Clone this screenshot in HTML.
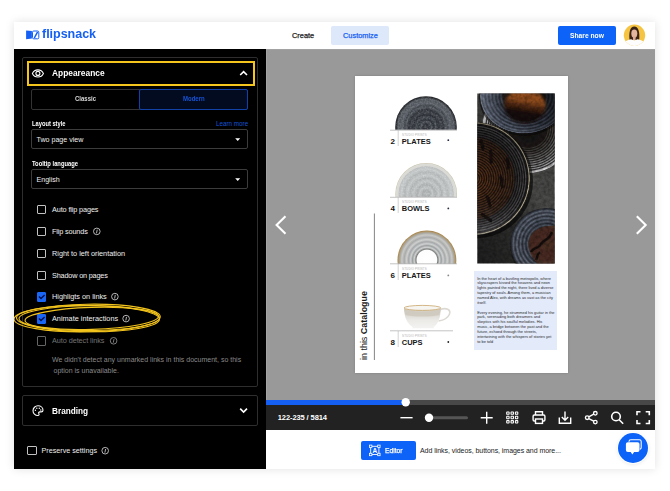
<!DOCTYPE html>
<html><head><meta charset="utf-8">
<style>
*{box-sizing:border-box;margin:0;padding:0}
html,body{width:670px;height:491px;background:#fff;overflow:hidden;font-family:"Liberation Sans",sans-serif;}
.abs{position:absolute}
.t{position:absolute;white-space:nowrap;color:#fff;line-height:10px;height:10px}
#card{position:absolute;left:14px;top:22px;width:641px;height:447px;background:#fff;box-shadow:0 0 9px rgba(0,0,0,.12);}
#side{position:absolute;left:14px;top:49px;width:252px;height:420px;background:#000}
#view{position:absolute;left:266px;top:49px;width:389px;height:351px;background:#999;border-left:1px solid #a4a4a4;border-top:1px solid #a2a2a2}
#prog{position:absolute;left:266px;top:400px;width:389px;height:5px;background:#484848}
#prog i{position:absolute;left:0;top:0;width:140px;height:5px;background:#1560f2}
#tb{position:absolute;left:266px;top:405px;width:389px;height:24.600px;background:#222}
.panel{position:absolute;border:1px solid #2e2e2e;border-radius:2px}
.cb{position:absolute;left:36.900px;width:9.500px;height:9.500px;border:1px solid #c2c2c2;border-radius:1px;margin-top:-0.500px}
.cb.on{background:#1a66f5;border-color:#1a66f5}
.sel{position:absolute;left:31px;width:217px;height:20px;border:1px solid #3c3c3c;border-radius:2px}
.lab{left:52px;font-size:7.3px;color:#f0f0f0}
#ov{position:absolute;left:0;top:0;width:670px;height:491px}
</style></head><body>
<div id="card"></div>
<!-- header -->
<div class="t" style="left:42px;top:27.800px;font-size:13.5px;font-weight:bold;color:#1560f2;letter-spacing:-0.05px;transform:scaleX(.93);transform-origin:0 0;line-height:12px;height:12px">flipsnack</div>
<div class="t" style="left:292px;top:30.500px;font-size:7.4px;color:#222;-webkit-text-stroke:0.25px #222">Create</div>
<div class="abs" style="left:331px;top:25.500px;width:58px;height:19.500px;background:#dee8fb;border-radius:2px"></div>
<div class="t" style="left:343px;top:30.500px;font-size:7.4px;color:#1560f2;-webkit-text-stroke:0.25px #1560f2">Customize</div>
<div class="abs" style="left:558px;top:25.500px;width:58px;height:19.500px;background:#0d62f7;border-radius:2px"></div>
<div class="t" style="left:570px;top:30.500px;font-size:7.6px;color:#fff;font-weight:bold;transform:scaleX(0.883);transform-origin:0 0">Share now</div>
<!-- sidebar -->
<div id="side"></div>
<div class="panel" style="left:22px;top:57px;width:236px;height:329.500px"></div>
<div class="abs" style="left:27px;top:61px;width:228.200px;height:25px;border:2.800px solid #f4c51c"></div>
<div class="t" style="left:52px;top:68.300px;font-size:9.4px;font-weight:bold;transform:scaleX(0.893);transform-origin:0 0">Appeareance</div>
<div class="abs" style="left:31px;top:89px;width:217px;height:20.500px;border:1px solid #333;border-radius:2px"></div>
<div class="abs" style="left:139px;top:89px;width:109px;height:20.500px;border:1px solid #1242a8;border-radius:2px;background:#030b20"></div>
<div class="t" style="left:75px;top:94px;font-size:6.6px;font-weight:bold;color:#d8d8d8;transform:scaleX(0.909);transform-origin:0 0">Classic</div>
<div class="t" style="left:182.500px;top:94px;font-size:6.6px;font-weight:bold;color:#1553d8;transform:scaleX(0.911);transform-origin:0 0">Modern</div>
<div class="t" style="left:31.800px;top:118.500px;font-size:6.5px;font-weight:bold;transform:scaleX(0.883);transform-origin:0 0">Layout style</div>
<div class="t" style="left:216px;top:118.500px;font-size:6.3px;color:#1553d8">Learn more</div>
<div class="sel" style="top:129px"></div>
<div class="t" style="left:36.500px;top:134.500px;font-size:7.1px;color:#eee">Two page view</div>
<div class="t" style="left:31.800px;top:158.500px;font-size:6.5px;font-weight:bold;transform:scaleX(0.893);transform-origin:0 0">Tooltip language</div>
<div class="sel" style="top:169px"></div>
<div class="t" style="left:36.500px;top:174.500px;font-size:7.1px;color:#eee">English</div>

<div class="cb" style="top:205px"></div><div class="t lab" style="top:204.500px;letter-spacing:-0.13px">Auto flip pages</div>
<div class="cb" style="top:227px"></div><div class="t lab" style="top:226.500px;letter-spacing:-0.15px">Flip sounds</div>
<div class="cb" style="top:249px"></div><div class="t lab" style="top:248.500px">Right to left orientation</div>
<div class="cb" style="top:271px"></div><div class="t lab" style="top:270.500px;letter-spacing:-0.18px">Shadow on pages</div>
<div class="cb on" style="left:36.800px;top:292.500px"></div><div class="t lab" style="top:292px">Highligts on links</div>
<div class="cb on" style="left:36.800px;top:314.500px"></div><div class="t lab" style="top:314px">Animate interactions</div>
<div class="cb" style="top:336.500px;border-color:#666"></div><div class="t lab" style="top:336px;color:#747474;letter-spacing:-0.07px">Auto detect links</div>
<div class="t" style="left:52px;top:354.500px;font-size:7px;color:#8a8a8a">We didn't detect any unmarked links in this document, so this</div>
<div class="t" style="left:53.500px;top:365.500px;font-size:7px;color:#8a8a8a">option is unavailable.</div>

<div class="panel" style="left:22px;top:394.500px;width:236px;height:31.500px"></div>
<div class="t" style="left:52px;top:405.500px;font-size:9.4px;font-weight:bold;transform:scaleX(0.877);transform-origin:0 0">Branding</div>
<div class="cb" style="left:27px;top:446px"></div>
<div class="t" style="left:41.500px;top:445.500px;font-size:7.2px;color:#eee">Preserve settings</div>

<!-- viewer -->
<div id="view"></div>
<div class="abs" style="left:354.500px;top:75.500px;width:213px;height:297.500px;background:#fff;box-shadow:0 0 2.500px rgba(0,0,0,.18)"></div>
<div class="abs" style="left:474px;top:271px;width:83px;height:78.500px;background:#e3ebfb"></div>
<div id="prog"><i></i></div>
<div id="tb"></div>
<div class="t" style="left:277.800px;top:413px;font-size:7.5px;font-weight:bold;letter-spacing:-0.1px">122-235 / 5814</div>
<!-- bottom bar -->
<div class="abs" style="left:360.500px;top:441px;width:55px;height:19px;background:#0d62f7;border-radius:2px"></div>
<div class="t" style="left:385px;top:445.500px;font-size:7.2px;color:#fff;transform:scaleX(0.937);transform-origin:0 0;-webkit-text-stroke:0.25px #fff">Editor</div>
<div class="t" style="left:420px;top:445.500px;font-size:7px;color:#222;letter-spacing:-0.05px">Add links, videos, buttons, images and more...</div>
<div class="abs" style="left:618.400px;top:432.700px;width:30px;height:30px;border-radius:50%;background:#0d62f7;box-shadow:0 0 0 1px rgba(255,255,255,.9),0 1px 4px rgba(0,0,0,.12)"></div>

<svg id="ov" viewBox="0 0 670 491">
<!--ICONS1-->
<!-- logo -->
<g fill="#1560f2" stroke="none">
<path d="M26.100 30.400 L31.900 31 L31.900 38.600 L26.100 39.200 Z"/>
</g>
<rect x="32.500" y="31" width="6.300" height="7.800" rx="1.200" fill="none" stroke="#1560f2" stroke-width="1"/>
<path d="M34.300 38 L37.600 31.800" stroke="#1560f2" stroke-width="1.500" fill="none"/>
<!-- avatar -->
<clipPath id="avc"><circle cx="634.500" cy="35.300" r="10.700"/></clipPath>
<circle cx="634.500" cy="35.300" r="10.700" fill="#f6c443"/>
<g clip-path="url(#avc)">
<path d="M629.500 40 C628.800 32 630 26.500 634.300 26.500 C638.600 26.500 639.800 32 639.200 40 Z" fill="#3a2219"/>
<ellipse cx="634.300" cy="33.600" rx="3" ry="4.200" fill="#e2b59c"/>
<rect x="633" y="36.500" width="2.600" height="3.500" fill="#dca98e"/>
<path d="M621 48 C621 44 626 40 631 39.300 L634.300 40.500 L637.600 39.300 C642.600 40 648 44 648 48 Z" fill="#fdfdfe"/>
</g>
<!-- eye -->
<g fill="none" stroke="#fff" stroke-width="1.100">
<path d="M32.400 73.400 C34.600 68.700 41.200 68.700 43.400 73.400 C41.200 78.100 34.600 78.100 32.400 73.400 Z"/>
<circle cx="37.900" cy="73.400" r="2"/>
</g>
<!-- chevrons -->
<path d="M240.200 75 L243.600 71.600 L247 75" fill="none" stroke="#fff" stroke-width="1.600"/>
<path d="M240.200 408.600 L243.600 412 L247 408.600" fill="none" stroke="#fff" stroke-width="1.600"/>
<!-- carets -->
<path d="M235.200 138.200 L240.200 138.200 L237.700 140.900 Z" fill="#fff"/>
<path d="M235.200 178.200 L240.200 178.200 L237.700 180.900 Z" fill="#fff"/>
<!-- info icons -->
<g fill="none" stroke="#e0e0e0" stroke-width="0.800">
<circle cx="96.800" cy="231.400" r="3.300"/><path d="M97.200 229.700 L96.500 233.300" />
<circle cx="114.900" cy="296.600" r="3.300"/><path d="M115.300 294.900 L114.600 298.500" />
<circle cx="126.100" cy="318.600" r="3.300"/><path d="M126.500 316.900 L125.800 320.500" />
<circle cx="105.200" cy="450.700" r="3.300"/><path d="M105.600 449 L104.900 452.600" />
</g>
<g fill="none" stroke="#9a9a9a" stroke-width="0.800">
<circle cx="113.600" cy="340.800" r="3.300"/><path d="M114 339.100 L113.300 342.700" />
</g>
<!-- checks -->
<path d="M39 296.500 L41 298.500 L44.600 294.900" fill="none" stroke="#06104a" stroke-width="1.400"/>
<path d="M39 318.500 L41 320.500 L44.600 316.900" fill="none" stroke="#06104a" stroke-width="1.400"/>
<!-- scribble -->
<clipPath id="sc"><rect x="14" y="290" width="252" height="60"/></clipPath>
<g clip-path="url(#sc)" fill="none" stroke="#f2c31c" stroke-width="1.100">
<ellipse cx="87.150" cy="318" rx="73.150" ry="13.800" transform="rotate(-1 87 318)"/>
<ellipse cx="89.250" cy="318.200" rx="70.250" ry="12.400" transform="rotate(-0.300 89 318)"/>
<ellipse cx="91.750" cy="318.400" rx="66.750" ry="11" transform="rotate(-1.800 92 318)"/>
<ellipse cx="88" cy="318.600" rx="71.500" ry="13.200" transform="rotate(0.600 88 318)"/>
</g>
<!-- palette -->
<g fill="none" stroke="#fff" stroke-width="1.100">
<path d="M38 405.800 C35.200 405.800 33 408 33 410.700 C33 413.400 35.200 415.500 37.800 415.500 C39.200 415.500 39.300 414.300 38.800 413.600 C38.300 412.700 38.900 411.900 39.900 411.900 L41.200 411.900 C42.400 411.900 43 411.200 43 410.200 C43 407.700 40.800 405.800 38 405.800 Z"/>
</g>
<g fill="#fff"><circle cx="35.400" cy="410.300" r="0.700"/><circle cx="36.800" cy="408.200" r="0.700"/><circle cx="39.300" cy="408.200" r="0.700"/><circle cx="40.800" cy="410" r="0.700"/></g>
<!-- nav -->
<path d="M285.500 216.200 L276.600 224.900 L285.500 233.800" fill="none" stroke="#fff" stroke-width="2.100"/>
<path d="M636.800 216.200 L645.700 224.900 L636.800 233.800" fill="none" stroke="#fff" stroke-width="2.100"/>
<!-- progress knob -->
<circle cx="405.700" cy="402.300" r="4.200" fill="#fff"/>
<!-- toolbar -->
<g fill="none" stroke="#fff" stroke-width="1.400">
<path d="M400.400 417.700 L412.600 417.700"/>
<path d="M480.700 417.700 L492.700 417.700 M486.700 411.700 L486.700 423.700"/>
</g>
<rect x="429" y="416.200" width="39" height="3" rx="1.500" fill="#555"/>
<circle cx="429" cy="417.700" r="4.200" fill="#fff"/>
<g fill="none" stroke="#fff" stroke-width="1.050">
<rect x="506.70" y="411.90" width="2.400" height="2.400" rx="0.400"/><rect x="511.05" y="411.90" width="2.400" height="2.400" rx="0.400"/><rect x="515.40" y="411.90" width="2.400" height="2.400" rx="0.400"/><rect x="506.70" y="416.25" width="2.400" height="2.400" rx="0.400"/><rect x="511.05" y="416.25" width="2.400" height="2.400" rx="0.400"/><rect x="515.40" y="416.25" width="2.400" height="2.400" rx="0.400"/><rect x="506.70" y="420.60" width="2.400" height="2.400" rx="0.400"/><rect x="511.05" y="420.60" width="2.400" height="2.400" rx="0.400"/><rect x="515.40" y="420.60" width="2.400" height="2.400" rx="0.400"/>
</g>
<!-- print -->
<g fill="none" stroke="#fff" stroke-width="1.400">
<path d="M535.500 415 L535.500 411.800 L542.500 411.800 L542.500 415"/>
<rect x="533.100" y="415" width="11.800" height="6" rx="1.200"/>
<rect x="535.500" y="419" width="7" height="4.400" fill="#222"/>
</g>
<!-- download -->
<g fill="none" stroke="#fff" stroke-width="1.400">
<path d="M559.300 417.500 L559.300 423.300 L570.700 423.300 L570.700 417.500"/>
<path d="M565 411.500 L565 420 M561.800 417 L565 420.200 L568.200 417"/>
</g>
<!-- share -->
<g fill="none" stroke="#fff" stroke-width="1.350">
<circle cx="595.300" cy="413.300" r="1.800"/><circle cx="587.200" cy="417.700" r="1.800"/><circle cx="595.300" cy="422.100" r="1.800"/>
<path d="M588.800 416.800 L593.700 414.200 M588.800 418.600 L593.700 421.200"/>
</g>
<!-- search -->
<g fill="none" stroke="#fff" stroke-width="1.600">
<circle cx="616" cy="416.500" r="4.300"/><path d="M619.200 419.700 L623.200 423.800"/>
</g>
<!-- fullscreen -->
<g fill="none" stroke="#fff" stroke-width="1.600">
<path d="M637 415.300 L637 411.800 L640.500 411.800 M645.700 411.800 L649.300 411.800 L649.300 415.300 M649.300 420 L649.300 423.500 L645.700 423.500 M640.500 423.500 L637 423.500 L637 420"/>
</g>
<!-- editor icon -->
<g transform="translate(0.900 0)">
<g fill="none" stroke="#fff" stroke-width="0.900">
<rect x="369.800" y="446.300" width="8.200" height="8.200"/>
</g>
<g fill="#0d62f7" stroke="#fff" stroke-width="0.800">
<rect x="368.600" y="445.100" width="2.400" height="2.400"/><rect x="376.800" y="445.100" width="2.400" height="2.400"/><rect x="368.600" y="453.300" width="2.400" height="2.400"/><rect x="376.800" y="453.300" width="2.400" height="2.400"/>
</g>
<text x="373.900" y="452.700" font-family="Liberation Sans, sans-serif" font-size="6.500" font-weight="bold" fill="#fff" text-anchor="middle">A</text>
</g>
<!-- chat -->
<g>
<path d="M629 441.800 v-0.300 a1.800 1.800 0 0 1 1.800 -1.800 h8.600 a1.800 1.800 0 0 1 1.800 1.800 v6 a1.800 1.800 0 0 1 -1.300 1.750" fill="none" stroke="#fff" stroke-width="1.100"/>
<path d="M625.900 444.100 a1.900 1.900 0 0 1 1.900 -1.900 h9.800 a1.900 1.900 0 0 1 1.900 1.900 v6 a1.900 1.900 0 0 1 -1.900 1.900 h-3.500 l-1.700 2.600 l-1.700 -2.600 h-2.900 a1.900 1.900 0 0 1 -1.900 -1.900 z" fill="#fff"/>
</g>

<!--/ICONS1-->
<!--PAGE1-->
<defs>
<radialGradient id="p1" gradientUnits="userSpaceOnUse" cx="426" cy="127" r="30.800">
<stop offset="0" stop-color="#3c4047"/><stop offset="0.100" stop-color="#2d3036"/><stop offset="0.170" stop-color="#4a4f57"/>
<stop offset="0.240" stop-color="#2c2f35"/><stop offset="0.320" stop-color="#444951"/><stop offset="0.400" stop-color="#292c32"/>
<stop offset="0.480" stop-color="#3e4249"/><stop offset="0.560" stop-color="#2d3036"/><stop offset="0.640" stop-color="#4f545c"/>
<stop offset="0.700" stop-color="#3e4249"/><stop offset="0.770" stop-color="#5d626a"/><stop offset="0.850" stop-color="#50555c"/><stop offset="0.910" stop-color="#565b62"/>
<stop offset="0.960" stop-color="#2c2f34"/><stop offset="1" stop-color="#1f2125"/>
</radialGradient>
<radialGradient id="p2" gradientUnits="userSpaceOnUse" cx="426.200" cy="193.800" r="30.800">
<stop offset="0" stop-color="#b4b8b8"/><stop offset="0.120" stop-color="#a8acac"/><stop offset="0.200" stop-color="#bfc2c2"/>
<stop offset="0.300" stop-color="#aaaeae"/><stop offset="0.400" stop-color="#c1c4c4"/><stop offset="0.500" stop-color="#adb1b1"/>
<stop offset="0.600" stop-color="#c4c7c7"/><stop offset="0.700" stop-color="#b1b5b5"/><stop offset="0.800" stop-color="#c6c9c9"/>
<stop offset="0.880" stop-color="#bcbfbf"/><stop offset="0.910" stop-color="#d9d9d5"/><stop offset="0.970" stop-color="#dcdcd7"/><stop offset="1" stop-color="#c4bca3"/>
</radialGradient>
<radialGradient id="p3" gradientUnits="userSpaceOnUse" cx="426.900" cy="260" r="29.400">
<stop offset="0" stop-color="#ffffff"/><stop offset="0.335" stop-color="#fdfdfd"/><stop offset="0.370" stop-color="#7d7f7e"/>
<stop offset="0.430" stop-color="#cfd1d1"/><stop offset="0.490" stop-color="#9da0a1"/><stop offset="0.550" stop-color="#d0d2d2"/>
<stop offset="0.620" stop-color="#a5a8a9"/><stop offset="0.690" stop-color="#cfd0cf"/><stop offset="0.770" stop-color="#a9abab"/>
<stop offset="0.850" stop-color="#c9c9c6"/><stop offset="0.920" stop-color="#a9a8a3"/><stop offset="0.960" stop-color="#b09a70"/><stop offset="1" stop-color="#a37e44"/>
</radialGradient>
<clipPath id="c1"><rect x="390" y="90" width="70" height="39.800"/></clipPath>
<clipPath id="c2"><rect x="390" y="157" width="70" height="40"/></clipPath>
<clipPath id="c3"><rect x="390" y="224" width="70" height="39.700"/></clipPath>
</defs>
<g clip-path="url(#c1)"><circle cx="426" cy="127" r="30.800" fill="url(#p1)"/></g>
<g clip-path="url(#c2)"><circle cx="426.200" cy="193.800" r="30.800" fill="url(#p2)"/></g>
<g clip-path="url(#c3)"><circle cx="426.900" cy="260" r="29.400" fill="url(#p3)"/></g>
<filter id="nz2" x="0" y="0" width="100%" height="100%"><feTurbulence type="fractalNoise" baseFrequency="0.600" numOctaves="2" seed="3"/><feColorMatrix type="matrix" values="0 0 0 0 1  0 0 0 0 1  0 0 0 0 1  1.800 0 0 0 -0.700"/></filter>
<clipPath id="c1b"><circle cx="426" cy="127" r="30.300"/></clipPath>
<clipPath id="c2b"><circle cx="426.200" cy="193.800" r="28"/></clipPath>
<g clip-path="url(#c1)"><g clip-path="url(#c1b)"><rect x="394" y="95" width="64" height="36" filter="url(#nz2)" opacity="0.220"/></g></g>
<g clip-path="url(#c2)"><g clip-path="url(#c2b)"><rect x="394" y="162" width="64" height="36" filter="url(#nz2)" opacity="0.300"/></g></g>
<!-- cup -->
<linearGradient id="cupg" x1="0" y1="0" x2="0" y2="1"><stop offset="0" stop-color="#d9d5cb"/><stop offset="0.350" stop-color="#dedbd4"/><stop offset="0.600" stop-color="#ebeae7"/><stop offset="1" stop-color="#f3f3f1"/></linearGradient>
<path d="M439.500 310 C446 307 451.500 309.500 449.300 314.500 C447.800 318 443 320.300 438.500 321" fill="none" stroke="#dcd9d2" stroke-width="1.600"/>
<path d="M404 308 C404.200 317 407 324 413 327.200 L412 328.300 L434.500 328.300 L433.500 327.200 C438.500 324 440.600 317 440.800 308 Z" fill="url(#cupg)"/>
<path d="M404 308 C405 312.500 439.800 312.500 440.800 308 C440.600 311 440 313.500 439.200 315 C430 317 414 317 405.600 315 C404.800 313.500 404.200 311 404 308Z" fill="#cdc7bb" opacity="0.800"/>
<ellipse cx="422.400" cy="307.900" rx="18.300" ry="2.500" fill="#f6f5f2" stroke="#c29a55" stroke-width="0.700"/>
<!-- lines -->
<g stroke="#9a9a9a" stroke-width="0.600" fill="none">
<path d="M390 130.200 L457 130.200 M390 197.300 L457 197.300 M390 263.800 L457 263.800 M390 330.800 L453 330.800"/>
</g>
<g stroke="#b5b5b5" stroke-width="0.600" fill="none">
<path d="M398.200 130 L398.200 146 M398.200 197.300 L398.200 213 M398.200 263.800 L398.200 280 M398.200 331 L398.200 347"/>
</g>
<path d="M374.400 213.500 L374.400 360" stroke="#666" stroke-width="0.800" fill="none"/>
<g font-family="Liberation Sans, sans-serif" font-weight="bold" font-size="8" fill="#151515">
<text x="390.500" y="143.900">2</text><text x="401.800" y="143.900" textLength="29" lengthAdjust="spacingAndGlyphs">PLATES</text>
<text x="390.500" y="211">4</text><text x="401.800" y="211" textLength="27.800" lengthAdjust="spacingAndGlyphs">BOWLS</text>
<text x="390.500" y="278">6</text><text x="401.800" y="278" textLength="29" lengthAdjust="spacingAndGlyphs">PLATES</text>
<text x="390.500" y="344.700">8</text><text x="401.800" y="344.700" textLength="20.800" lengthAdjust="spacingAndGlyphs">CUPS</text>
</g>
<g font-family="Liberation Sans, sans-serif" font-size="2.900" fill="#b0b0b0" letter-spacing="0.200">
<text x="402" y="136.400">STUDIO PRINTS</text><text x="402" y="203.400">STUDIO PRINTS</text><text x="402" y="270.400">STUDIO PRINTS</text><text x="402" y="337.400">STUDIO PRINTS</text>
</g>
<g fill="#252a4a"><circle cx="448.300" cy="140.200" r="0.900"/><circle cx="448.300" cy="208.400" r="0.900"/><circle cx="448.300" cy="275.400" r="0.900" fill="#888"/><circle cx="448.300" cy="342" r="0.900" fill="#222"/></g>
<text transform="translate(367 360) rotate(-90)" font-family="Liberation Sans, sans-serif" font-size="9.300" fill="#1a1a1a" textLength="69" lengthAdjust="spacingAndGlyphs">in this <tspan font-weight="bold">Catalogue</tspan></text>
<!--PHOTO1-->
<defs>
<clipPath id="ph"><rect x="477.300" y="93.600" width="77.400" height="169.900"/></clipPath>
<linearGradient id="bg" x1="0" y1="1" x2="1" y2="0"><stop offset="0" stop-color="#1e1e1e"/><stop offset="0.350" stop-color="#2c2c2b"/><stop offset="0.600" stop-color="#4b4b49"/><stop offset="1" stop-color="#3a3a39"/></linearGradient>
<radialGradient id="q2" gradientUnits="userSpaceOnUse" cx="528" cy="128" r="46">
<stop offset="0.000" stop-color="#15120f"/><stop offset="0.420" stop-color="#1b1714"/><stop offset="0.440" stop-color="#3a3633"/><stop offset="0.465" stop-color="#191614"/><stop offset="0.490" stop-color="#403d3a"/><stop offset="0.515" stop-color="#1b1817"/><stop offset="0.540" stop-color="#4a4644"/><stop offset="0.565" stop-color="#1d1a19"/><stop offset="0.590" stop-color="#555250"/><stop offset="0.615" stop-color="#1e1d1c"/><stop offset="0.640" stop-color="#615f5d"/><stop offset="0.665" stop-color="#201f1e"/><stop offset="0.690" stop-color="#6f6c6b"/><stop offset="0.715" stop-color="#222120"/><stop offset="0.740" stop-color="#7d7b7a"/><stop offset="0.765" stop-color="#242323"/><stop offset="0.790" stop-color="#8b8a8a"/><stop offset="0.815" stop-color="#262525"/><stop offset="0.840" stop-color="#9b9a9b"/><stop offset="0.865" stop-color="#282728"/><stop offset="0.890" stop-color="#abaaac"/><stop offset="0.915" stop-color="#29292a"/><stop offset="0.945" stop-color="#c8c8ca"/><stop offset="0.975" stop-color="#e0e0e2"/><stop offset="1.000" stop-color="#707072"/>
</radialGradient>
<radialGradient id="q1" gradientUnits="userSpaceOnUse" cx="524" cy="96" r="44" gradientTransform="translate(0 14.200) scale(1 0.852)">
<stop offset="0" stop-color="#1a110c"/><stop offset="0.480" stop-color="#1a1310"/><stop offset="0.520" stop-color="#3a3f4a"/><stop offset="0.560" stop-color="#191c23"/>
<stop offset="0.600" stop-color="#3f4553"/><stop offset="0.640" stop-color="#1c2028"/><stop offset="0.680" stop-color="#464d5b"/><stop offset="0.720" stop-color="#20242d"/>
<stop offset="0.760" stop-color="#4d5564"/><stop offset="0.800" stop-color="#242832"/><stop offset="0.840" stop-color="#525a6a"/><stop offset="0.880" stop-color="#282c36"/>
<stop offset="0.920" stop-color="#586172"/><stop offset="0.955" stop-color="#3a404c"/><stop offset="0.985" stop-color="#687080"/><stop offset="1" stop-color="#1a1c22"/>
</radialGradient>
<linearGradient id="q1w" x1="0.600" y1="0" x2="0.400" y2="1"><stop offset="0" stop-color="#7a3e18"/><stop offset="0.300" stop-color="#98501f"/><stop offset="0.520" stop-color="#4a2612"/><stop offset="0.700" stop-color="#140c08"/><stop offset="1" stop-color="#120c09"/></linearGradient>
<linearGradient id="lit" x1="0" y1="0" x2="1" y2="0"><stop offset="0" stop-color="#aab4c6" stop-opacity="0.350"/><stop offset="0.350" stop-color="#aab4c6" stop-opacity="0.050"/><stop offset="0.700" stop-color="#000" stop-opacity="0.150"/><stop offset="1" stop-color="#000" stop-opacity="0.450"/></linearGradient>
<radialGradient id="q3" gradientUnits="userSpaceOnUse" cx="473.500" cy="178.500" r="56.500">
<stop offset="0.000" stop-color="#62371b"/><stop offset="0.021" stop-color="#1b110c"/><stop offset="0.042" stop-color="#62371b"/><stop offset="0.063" stop-color="#1b110c"/><stop offset="0.084" stop-color="#61371b"/><stop offset="0.105" stop-color="#1b110c"/><stop offset="0.126" stop-color="#60361b"/><stop offset="0.147" stop-color="#1b110c"/><stop offset="0.168" stop-color="#5e361c"/><stop offset="0.189" stop-color="#1b110c"/><stop offset="0.210" stop-color="#5d351c"/><stop offset="0.231" stop-color="#1b110c"/><stop offset="0.252" stop-color="#5b351c"/><stop offset="0.273" stop-color="#1b110c"/><stop offset="0.294" stop-color="#59341d"/><stop offset="0.315" stop-color="#1b110c"/><stop offset="0.336" stop-color="#57331d"/><stop offset="0.357" stop-color="#1b110c"/><stop offset="0.378" stop-color="#55331d"/><stop offset="0.399" stop-color="#1b110c"/><stop offset="0.420" stop-color="#53321e"/><stop offset="0.441" stop-color="#1b110c"/><stop offset="0.462" stop-color="#51311e"/><stop offset="0.483" stop-color="#1b110c"/><stop offset="0.504" stop-color="#4e311f"/><stop offset="0.525" stop-color="#1b110c"/><stop offset="0.546" stop-color="#4c301f"/><stop offset="0.567" stop-color="#1b110c"/><stop offset="0.588" stop-color="#492f1f"/><stop offset="0.609" stop-color="#1b110c"/><stop offset="0.630" stop-color="#462e20"/><stop offset="0.651" stop-color="#1b110c"/><stop offset="0.672" stop-color="#432d20"/><stop offset="0.693" stop-color="#1b110c"/><stop offset="0.714" stop-color="#402c21"/><stop offset="0.735" stop-color="#131213"/><stop offset="0.756" stop-color="#363434"/><stop offset="0.777" stop-color="#131213"/><stop offset="0.798" stop-color="#3d3b3b"/><stop offset="0.819" stop-color="#131213"/><stop offset="0.840" stop-color="#434243"/><stop offset="0.861" stop-color="#131213"/><stop offset="0.882" stop-color="#4a4a4b"/><stop offset="0.903" stop-color="#131213"/><stop offset="0.924" stop-color="#515152"/><stop offset="0.945" stop-color="#131213"/><stop offset="0.968" stop-color="#222120"/><stop offset="0.983" stop-color="#beb498"/><stop offset="0.992" stop-color="#9a9078"/><stop offset="1.000" stop-color="#403b33"/>
</radialGradient>
<linearGradient id="lit3" x1="0" y1="0" x2="0" y2="1"><stop offset="0" stop-color="#000" stop-opacity="0.250"/><stop offset="0.600" stop-color="#000" stop-opacity="0"/><stop offset="0.850" stop-color="#b0b0b4" stop-opacity="0.100"/><stop offset="1" stop-color="#c0c0c4" stop-opacity="0.300"/></linearGradient>
<radialGradient id="q4" gradientUnits="userSpaceOnUse" cx="546.400" cy="244" r="36">
<stop offset="0" stop-color="#3e2a20"/><stop offset="0.400" stop-color="#33241c"/><stop offset="0.470" stop-color="#22242c"/><stop offset="0.520" stop-color="#505866"/>
<stop offset="0.570" stop-color="#272b33"/><stop offset="0.620" stop-color="#596170"/><stop offset="0.670" stop-color="#2a2e37"/><stop offset="0.720" stop-color="#606877"/>
<stop offset="0.770" stop-color="#2e323b"/><stop offset="0.820" stop-color="#69717f"/><stop offset="0.870" stop-color="#30343e"/><stop offset="0.920" stop-color="#626a78"/><stop offset="0.960" stop-color="#353943"/><stop offset="1" stop-color="#1b1d22"/>
</radialGradient>
<filter id="bl" x="-5%" y="-5%" width="110%" height="110%"><feGaussianBlur stdDeviation="0.450"/></filter>
<filter id="bl2" x="-20%" y="-20%" width="140%" height="140%"><feGaussianBlur stdDeviation="1.600"/></filter>
<filter id="nz" x="0" y="0" width="100%" height="100%"><feTurbulence type="fractalNoise" baseFrequency="0.280" numOctaves="2" seed="7" result="t"/><feColorMatrix type="matrix" values="0 0 0 0 0  0 0 0 0 0  0 0 0 0 0  1.600 0 0 0 -0.550"/></filter>
<clipPath id="k1"><ellipse cx="524" cy="96" rx="44" ry="37.500"/></clipPath>
<clipPath id="k3"><circle cx="473.500" cy="178.500" r="56.500"/></clipPath>
</defs>
<g clip-path="url(#ph)">
<rect x="477" y="93" width="78" height="171" fill="url(#bg)"/>
<g filter="url(#bl)">
<ellipse cx="528" cy="128" rx="46" ry="45" fill="url(#q2)"/>
<ellipse cx="524" cy="98" rx="45" ry="38" fill="#0a0a0a" opacity="0.550"/>
<ellipse cx="524" cy="96" rx="44" ry="37.500" fill="url(#q1)"/>
<g clip-path="url(#k1)"><rect x="477" y="93" width="78" height="45" fill="url(#lit)"/></g>
<ellipse cx="525" cy="106" rx="20.500" ry="17.500" fill="url(#q1w)" filter="url(#bl2)"/>
<ellipse cx="547.400" cy="246" rx="37" ry="37" fill="#111" opacity="0.500"/>
<circle cx="546.400" cy="244" r="36" fill="url(#q4)"/>
<path d="M529 240 C531 230 543 225 555 226 L555 264 L538 264 C531 258 527 248 529 240Z" fill="#4a2e22" opacity="0.900"/>
<path d="M531 252 C534 246 538 250 541 244 C544 239 549 241 552 232 M536 260 C538 256 537 254 540 252" stroke="#120d0b" stroke-width="2.600" fill="none" opacity="0.850"/>
<circle cx="475.500" cy="181" r="57.500" fill="#080808" opacity="0.600"/>
<circle cx="473.500" cy="178.500" r="56.500" fill="url(#q3)"/>
<g clip-path="url(#k3)"><rect x="477" y="120" width="60" height="118" fill="url(#lit3)"/></g>
<path d="M490 150 C493 154 489 160 492 163 M500 176 C503 180 500 184 503 188 M486 196 C490 199 488 204 491 207 M480 140 C484 143 481 148 484 150 M507 158 C509 162 507 166 509 169 M481 214 C486 216 488 220 492 221" stroke="#0e0a08" stroke-width="3.200" fill="none" opacity="0.750"/>
</g>
<rect x="477" y="93" width="78" height="171" filter="url(#nz)" opacity="0.400"/>
</g>
<!--/PHOTO1-->
<!--PARA1-->
<g font-family="Liberation Sans, sans-serif" font-size="3.920" fill="#2a2a2a">
<text x="477.200" y="279.50">In the heart of a bustling metropolis, where</text>
<text x="477.200" y="284.38">skyscrapers kissed the heavens and neon</text>
<text x="477.200" y="289.26">lights painted the night, there lived a diverse</text>
<text x="477.200" y="294.14">tapestry of souls. Among them, a musician</text>
<text x="477.200" y="299.02">named Alex, with dreams as vast as the city</text>
<text x="477.200" y="303.90">itself.</text>
<text x="477.200" y="313.60">Every evening, he strummed his guitar in the</text>
<text x="477.200" y="318.48">park, serenading both dreamers and</text>
<text x="477.200" y="323.36">skeptics with his soulful melodies. His</text>
<text x="477.200" y="328.24">music, a bridge between the past and the</text>
<text x="477.200" y="333.12">future, echoed through the streets,</text>
<text x="477.200" y="338.00">intertwining with the whispers of stories yet</text>
<text x="477.200" y="342.88">to be told</text>
</g>
<!--/PARA1-->

<!--/PAGE1-->
</svg>
</body></html>
